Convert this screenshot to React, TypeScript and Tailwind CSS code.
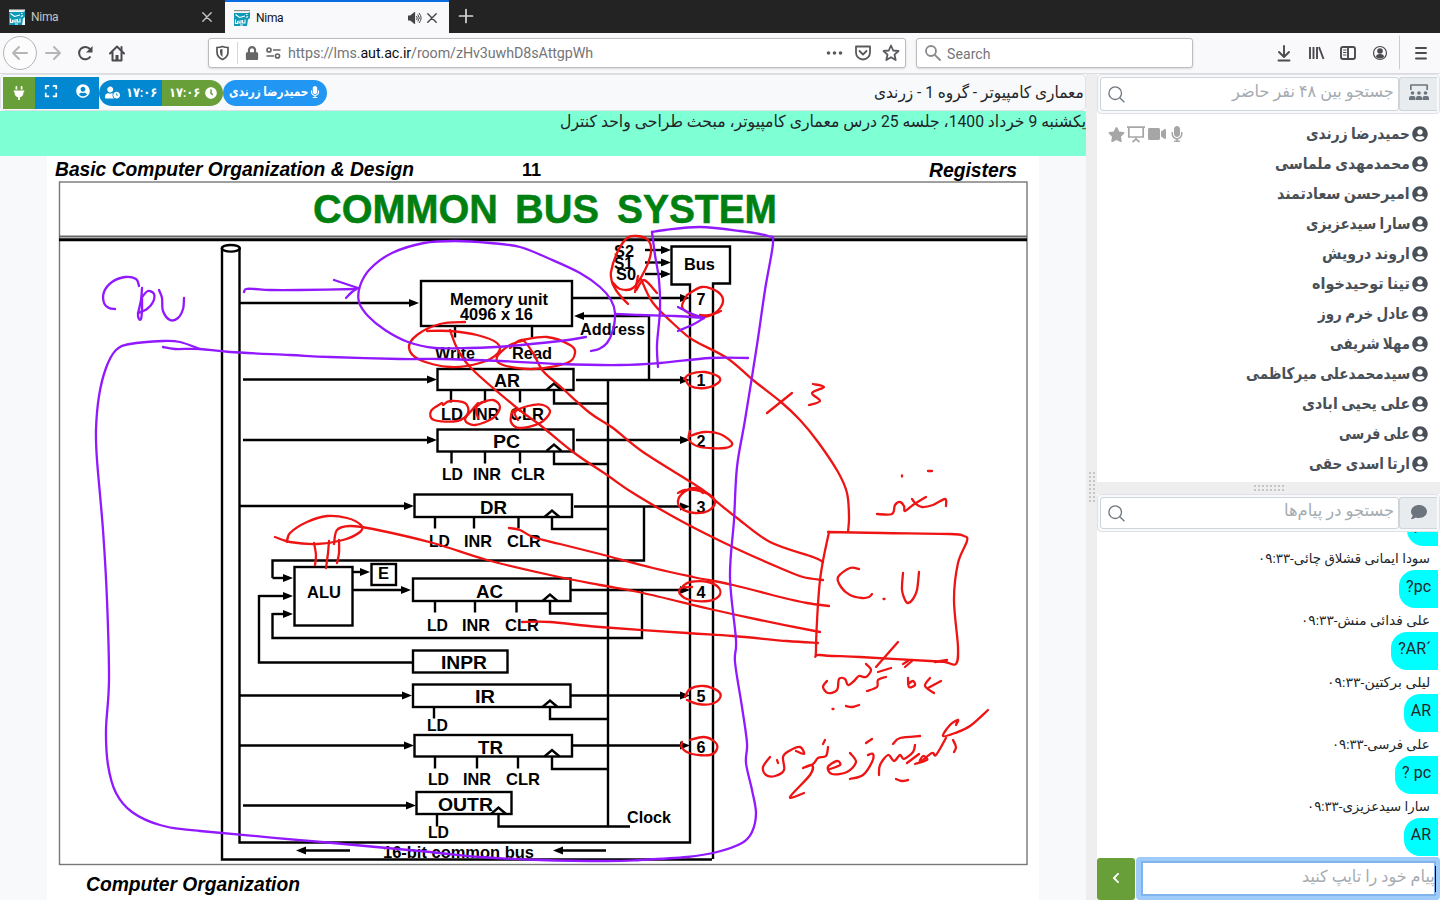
import { useLayoutEffect, useRef, type ReactNode } from "react";
import {
  FaPlug,
  FaExpand,
  FaUserCircle,
  FaUserClock,
  FaClock,
  FaMicrophone,
  FaVideo,
  FaStar,
  FaComment,
  FaChevronLeft,
  FaLock,
} from "react-icons/fa";

function Run({ w, className = "", children }: { w: number; className?: string; children: ReactNode }) {
  const ref = useRef<HTMLSpanElement>(null);
  useLayoutEffect(() => {
    const el = ref.current;
    if (el && el.offsetWidth) el.style.transform = `scaleX(${w / el.offsetWidth})`;
  }, [w]);
  return (
    <span className={`flex shrink-0 justify-start ${className}`} style={{ width: w }} dir="rtl">
      <span ref={ref} className="inline-block origin-right whitespace-nowrap">
        {children}
      </span>
    </span>
  );
}

/* Smooth path through "x,y x,y ..." points (Catmull-Rom to Bezier). */
function smooth(s: string) {
  const p = s.trim().split(/\s+/).map((q) => q.split(",").map(Number));
  let d = `M${p[0][0]},${p[0][1]}`;
  for (let i = 0; i < p.length - 1; i++) {
    const a = p[i - 1] ?? p[i];
    const b = p[i];
    const c = p[i + 1];
    const e = p[i + 2] ?? c;
    d += ` C${b[0] + (c[0] - a[0]) / 6},${b[1] + (c[1] - a[1]) / 6} ${c[0] - (e[0] - b[0]) / 6},${c[1] - (e[1] - b[1]) / 6} ${c[0]},${c[1]}`;
  }
  return d;
}

const purple = [
  "139,286 136,279 125,277 112,282 104,292 104,303 109,308 115,309",
  "142,288 141,300 138,314 139,319 141,319 142,310 142,296",
  "142,297 148,291 154,294 153,302 147,309 138,313",
  "159,290 162,298 163,311 170,320 178,318 183,309 184,298",
  "244,292 246,289 255,289 270,290 300,290 356,289",
  "334,280 346,284 358,288",
  "358,288 352,292 346,298",
  "586,337 560,341 510,346 470,348 435,348 408,342 385,330 368,316 359,302 360,286 370,269 392,253 424,243 455,241 490,243 520,247 550,259 580,273 600,287 611,300 615,313 613,330 607,343 599,349 591,351",
  "615,314 640,315 675,316 704,318",
  "678,307 690,313 704,318",
  "704,318 694,324 678,331",
  "163,347 175,349 200,349 230,352 290,355 330,357 400,359 440,359 500,361 560,364 620,365 660,363 710,358 748,358",
  "658,367 657,345 660,310 659,280 655,255 652,232",
  "652,232 665,230 700,227 740,231 768,236 773,243 765,290 757,345 745,420 737,467 734,520 730,577 736,640 735,662 742,707 747,743 746,763 752,790 756,813 752,832 742,843 717,852 687,857 640,860 607,861 540,860 480,857 430,852 333,843 200,831 160,825 132,812 116,793 108,765 106,730 109,680 107,600 103,530 97,460 96,430 99,396 106,368 116,350 130,344 163,341 180,342 200,349",
];

const red = [
  "612,282 611,272 617,253 627,238 637,236 648,240 651,252 645,270 633,288 620,289 612,282 618,293 628,304",
  "635,292 638,276 636,290 644,280 657,293",
  "641,279 653,303 677,327 693,340 727,358 753,380 781,402 800,420 818,442 838,472 847,493 849,517 848,532",
  "792,393 767,413",
  "813,384 824,387 812,393 820,401 809,405",
  "902,475.5 902,476.5",
  "928,471 932,471",
  "877,514 892,514 895,505 900,502 904,506 905,511 913,505 926,497",
  "912,499 916,504 922,507 933,505 945,499 946,506",
  "828,532 883,533 950,534 964,536 967,541 958,563 954,600 958,647 956,664 945,662 930,661 860,657 820,655 816,650 820,580 829,532",
  "859,569 850,568 838,577 841,587 850,595 862,598 869,597 872,594",
  "883.5,599 884.5,599",
  "903,573 902,590 905,600 908,603 913,599 917,590 919,572",
  "510,348 522,340 533,353 543,371 562,388 590,413 613,428 643,452 700,488 717,502 737,518 770,542 813,557 823,562",
  "450,330 458,350 473,370 517,408 540,425 573,452 607,475 633,493 683,522 735,548 780,568 803,577 823,580",
  "509,528 520,530 533,537 560,544 600,554 653,568 693,577 733,585 780,597 807,603 829,606",
  "334,544 337,530 350,526 373,529 433,543 487,560 550,575 600,585 643,593 710,609 760,620 820,632",
  "522,622 550,622 600,627 687,633 733,636 787,641 818,643",
  "275,537 290,542 317,544 343,540 360,532 361,525 347,518 327,516 307,522 290,533 287,542",
  "314,543 316,555 315,565",
  "329,541 328,553 326,568",
  "339,540 339,553 337,563",
  "465,322 440,324 417,335 409,348 420,360 450,367 480,363 498,353 497,343 477,335 450,331 427,331",
  "522,340 547,337 570,345 575,353 567,363 533,369 503,365 497,357 510,345 525,340",
  "442,403 431,411 434,420 457,421 468,413 465,403 450,401 443,405",
  "480,403 493,400 500,407 493,418 475,425 465,420 472,410 478,403",
  "478,418 476,408 483,402",
  "518,420 515,412 528,406 543,405 550,412 540,423 520,428 511,422 513,411 520,410",
  "687,295 702,287 718,292 723,302 715,313 700,317 687,312 682,306 687,295",
  "700,315 710,315 721,311",
  "684,379 690,374 705,372 719,377 718,383 705,388 690,386 685,378",
  "690,431 689,440 700,447 725,448 732,443 720,434 704,432 690,436",
  "678,493 685,490 696,490 710,495 715,503 708,511 695,513 682,509 678,501 684,492 695,488 703,493",
  "683,586 690,582 708,582 719,588 719,596 708,601 690,600 680,594 681,588 692,587",
  "685,697 690,689 704,686 718,691 720,698 711,704 698,704 687,700",
  "682,742 682,748 692,754 710,755 717,749 715,742 704,737 690,740",
  "827,681 823,687 828,693 837,690 839,679 845,679 848,685 854,681 859,676 866,677 871,670 866,664",
  "898,642 876,667",
  "878,672 891,668",
  "886,677 878,680 877,687 867,691",
  "832.5,709 833.5,709",
  "846,706 852,707 859,705",
  "903,664 908,661",
  "905,667 912,661",
  "935,662 947,660",
  "908,678 909,687 915,685 913,681 908,684",
  "930,678 925,686 934,693",
  "941,681 928,688",
  "770,757 763,767 766,775 775,776 784,770 783,757 789,751 800,747 804,754 796,751",
  "777,760 778,763",
  "825,740 823,744",
  "828,747 826,756 818,758 813,764 803,768 812,765 810,775 790,797 804,793",
  "850,753 856,762 847,772 832,774 828,767 837,761 840,765 830,769",
  "866,743 872,739",
  "868,755 873,754 872,762 863,775 850,779",
  "879,775 880,765 888,755 894,761 900,755 904,759 913,752 915,745",
  "893,744 900,738 920,736",
  "907,763 919,754",
  "896,779 902,781 908,780",
  "915,764 927,760 923,756 920,762 932,753 936,755 946,738",
  "958,720 956,725 958,720 950,725 943,736 955,733 970,726 988,710",
  "953,740 956,747 954,752",
];

/* x, baseline, width, size, text */
const labels: [number, number, number, number, string][] = [
  [450, 305, 98, 17, "Memory unit"],
  [460, 320, 73, 17, "4096 x 16"],
  [435, 359, 40, 16, "Write"],
  [512, 359, 40, 16, "Read"],
  [580, 335, 65, 17, "Address"],
  [684, 269.5, 31, 17, "Bus"],
  [614, 257, 20, 16, "S2"],
  [614, 268.5, 19, 16, "S1"],
  [616, 280, 20, 16, "S0"],
  [494, 386.5, 26, 19, "AR"],
  [493, 448, 27, 19, "PC"],
  [480, 513.5, 27, 19, "DR"],
  [307, 597.5, 34, 17, "ALU"],
  [378, 579, 11, 16, "E"],
  [476, 597.5, 27, 19, "AC"],
  [441, 669, 46, 19, "INPR"],
  [475, 703, 20, 19, "IR"],
  [478, 753.5, 25, 19, "TR"],
  [438, 810.5, 55, 19, "OUTR"],
  [627, 822.5, 44, 17, "Clock"],
  [383, 857.5, 151, 17, "16-bit common bus"],
  [441, 419.5, 22, 17, "LD"], [472, 419.5, 27, 17, "INR"], [510, 419.5, 34, 17, "CLR"],
  [442, 480, 21, 17, "LD"], [473, 480, 28, 17, "INR"], [511, 480, 34, 17, "CLR"],
  [429, 547, 21, 17, "LD"], [464, 547, 28, 17, "INR"], [507, 547, 34, 17, "CLR"],
  [427, 630.5, 21, 17, "LD"], [462, 630.5, 28, 17, "INR"], [505, 630.5, 34, 17, "CLR"],
  [427, 730.5, 21, 17, "LD"],
  [428, 784.5, 21, 17, "LD"], [463, 784.5, 28, 17, "INR"], [506, 784.5, 34, 17, "CLR"],
  [428, 837.5, 21, 17, "LD"],
  [696.5, 305, 9, 16.5, "7"],
  [696.5, 386, 9, 16.5, "1"],
  [696.5, 446.5, 9, 16.5, "2"],
  [696.5, 513, 9, 16.5, "3"],
  [696.5, 597.5, 9, 16.5, "4"],
  [696.5, 702, 9, 16.5, "5"],
  [696.5, 752.5, 9, 16.5, "6"],
];

/* x, y, width, height */
const boxes = [
  [421, 281, 151, 45], [437.5, 369, 136, 21], [437.5, 429.5, 136, 22], [414.5, 494.5, 157.5, 22.5],
  [413, 578.5, 157.5, 22.5], [413, 650.5, 94.5, 22], [413, 684.5, 157.5, 22.5], [414.5, 735, 157.5, 21.5],
  [416.5, 792, 95, 22], [294.5, 567, 58, 58.5], [371.5, 564, 24.5, 21],
];

/* x1, x2, y of arrows whose head is at x2 */
const arrows = [
  [240, 419, 303], [572, 690, 298], [649, 574, 316], [243, 437, 379.5], [576, 690, 380], [243, 437, 440],
  [576, 690, 440], [240, 414, 506], [574, 690, 506.5], [352, 411, 590], [571, 690, 590], [352, 370, 572],
  [240, 412, 695.5], [571, 690, 695.5], [240, 414, 745.5], [572, 690, 745.5], [243, 416, 805.5],
  [272.5, 293, 578], [259, 293, 596], [272.5, 293, 614], [645, 671, 250], [645, 671, 262.5], [645, 671, 274],
  [350, 296, 850.5], [606, 553, 850.5],
];

/* peak x, box bottom y, y of the wire to the clock line */
const clocks = [
  [554, 390, 403.5], [554, 451, 464], [552, 517, 529], [550, 601, 613.5], [550, 707, 719], [552, 756.5, 769], [498.5, 814, 826.5],
];

const ticks = [
  [455, 326], [532, 326], [451, 391], [485, 391], [520, 391], [451.5, 452], [485, 452], [520, 452],
  [435, 517], [474, 517], [518.5, 517], [435, 601], [475, 601], [516.5, 601], [434, 707],
  [435, 757], [477, 757], [518, 757], [437, 815],
];

function Slide() {
  return (
    <svg width="1086" height="744" viewBox="0 156 1086 744" className="block shrink-0" fontFamily="'Liberation Sans', Arial, sans-serif" fontWeight="bold">
      <rect x="0" y="156" width="1086" height="744" fill="#f8f9fb" />
      <rect x="47" y="156" width="992" height="744" fill="#fff" />
      <rect x="59.5" y="182" width="967.5" height="682.5" fill="none" stroke="#777" strokeWidth="1.4" />
      <path d="M59,236.5H1027" stroke="#666" strokeWidth="2" />
      <path d="M59,239.7H1027" stroke="#000" strokeWidth="3" />
      <g fontStyle="italic" fontSize="20">
        <text x="55" y="175.5" textLength="359" lengthAdjust="spacingAndGlyphs">Basic Computer Organization &amp; Design</text>
        <text x="929" y="177" textLength="88" lengthAdjust="spacingAndGlyphs">Registers</text>
        <text x="86" y="891" textLength="214" lengthAdjust="spacingAndGlyphs">Computer Organization</text>
      </g>
      <text x="522" y="176" fontSize="18" textLength="19">11</text>
      <g fill="#008010" stroke="#008010" strokeWidth="0.5" fontSize="40.5">
        <text x="313" y="223" textLength="185" lengthAdjust="spacingAndGlyphs">COMMON</text>
        <text x="515" y="223" textLength="84" lengthAdjust="spacingAndGlyphs">BUS</text>
        <text x="617" y="223" textLength="160" lengthAdjust="spacingAndGlyphs">SYSTEM</text>
      </g>
      <g stroke="#000" strokeWidth="2.4" fill="none">
        <path d="M222,248V859.5H712M239.5,248V842.5H690V284.5H671.5V246.5H730V283.5H713V859" />
        <ellipse cx="230.8" cy="248.3" rx="9" ry="3.3" />
        {boxes.map(([x, y, w, h]) => <rect key={`${x}-${y}`} x={x} y={y} width={w} height={h} />)}
        {arrows.map(([a, b, y], i) => <path key={i} d={`M${a},${y}H${b - Math.sign(b - a) * 4}`} />)}
        {clocks.map(([x, y, w], i) => (
          <path key={i} d={`M${x - 7.5},${y}L${x},${y - 6.5}L${x + 7.5},${y}M${x},${y}V${w}H${i === 6 ? 630 : 608}`} />
        ))}
        {ticks.map(([x, y], i) => <path key={i} d={`M${x},${y}V${y + 11.5}`} />)}
        <path d="M608,380V826.5M649,315V379M644,506V560.5H272.5V578M642,590V638H272.5V613M413,662.5H259V595" />
      </g>
      {arrows.map(([a, b, y], i) => {
        const s = Math.sign(b - a);
        return <path key={i} d={`M${b},${y}l${-10 * s},-4v8z`} />;
      })}
      {labels.map(([x, y, w, s, t], i) => (
        <text key={i} x={x} y={y} fontSize={s} textLength={w} lengthAdjust="spacingAndGlyphs">{t}</text>
      ))}
      <g fill="none" strokeLinecap="round" strokeLinejoin="round" strokeWidth="2.3">
        <g stroke="#ee1414">{red.map((s, i) => <path key={i} d={smooth(s)} />)}</g>
        <g stroke="#9118ff">{purple.map((s, i) => <path key={i} d={smooth(s)} />)}</g>
      </g>
    </svg>
  );
}

function Favicon() {
  return (
    <svg width="16" height="16" viewBox="0 0 16 16">
      <path d="M0 0h16v16H0z" fill="#f4fafb" />
      <path d="M0 0h16v1.2H0z" fill="#8b8b8b" />
      <path d="M0 3h14l2-1v6l-2 1.500-1 6.500H0z" fill="#0d9ab8" />
      <path d="M1.500 4.500 5.500 7.500 11 6M12 4.500h1.500M1.500 9.500v4h2v-2.500M5 10.500v2.500h2v-3M8.500 10v3h2.500V9.500M6 15h3M12 7.500l2-1" stroke="#fff" strokeWidth="1.1" fill="none" />
    </svg>
  );
}

function Close({ color }: { color: string }) {
  return (
    <svg width="10" height="10" viewBox="0 0 10 10" stroke={color} strokeWidth="1.4" strokeLinecap="round">
      <path d="M.8.8l8.4 8.4M9.2.8L.8 9.2" />
    </svg>
  );
}

function BrowserChrome() {
  return (
    <>
      <div className="flex h-[33px] shrink-0 bg-[#232323] text-[12px]">
        <div className="flex w-[225px] items-center pl-[9px] pr-[13px] pt-px text-[#c4c4c4]">
          <Favicon />
          <span className="ml-[6px] flex-1 tracking-[-0.3px]">Nima</span>
          <Close color="#c4c4c4" />
        </div>
        <div className="flex w-[224px] items-center border-t-2 border-[#0a6ce0] bg-[#f9f9fb] pl-[9px] pr-[12px] text-[#111]">
          <Favicon />
          <span className="ml-[6px] flex-1 tracking-[-0.3px]">Nima</span>
          <svg width="14" height="12" viewBox="0 0 14 12" className="mr-[5px]" fill="none" stroke="#444" strokeWidth="1.2">
            <path d="M.5 4h2L6.500 .8v10.400L2.500 8h-2z" fill="#444" />
            <path d="M8.500 4q1.500 2 0 4M9.800 2.500q3 3.500 0 7M11 1q4.200 5 0 10" strokeWidth="1" />
          </svg>
          <Close color="#444" />
        </div>
        <svg width="34" height="33" viewBox="0 0 34 33" stroke="#d8d8d8" strokeWidth="1.7" strokeLinecap="round">
          <path d="M10.500 16h13M17 9.500v13" />
        </svg>
      </div>
      <div className="flex h-[41px] shrink-0 items-center border-b border-[#dcdcde] bg-[#f9f9fb]">
        <svg width="208" height="40" viewBox="0 33 208 40" fill="none" strokeWidth="2" strokeLinecap="round" strokeLinejoin="round">
          <circle cx="20" cy="53" r="16.500" stroke="#b4b4b6" strokeWidth="1" fill="#fcfcfd" />
          <path d="M13 53h14M19 47l-6 6 6 6M46 53h14M54 47l6 6-6 6" stroke="#b5b5b7" />
          <path d="M90.500 56.500A6.200 6.200 0 1 1 90 49" stroke="#4a4a4f" strokeLinecap="butt" />
          <path d="M92.500 46v6.500H86z" fill="#4a4a4f" />
          <path d="M110 53.500l7-7 7 7M112.500 52.500v8h9v-8" stroke="#4a4a4f" />
          <path d="M115.500 60v-5h3v5z" fill="#4a4a4f" />
          <path d="M121.500 47v3" stroke="#4a4a4f" />
        </svg>
        <div className="flex h-[30px] w-[698px] items-center rounded-[3px] border border-[#bcbcbe] bg-white shadow-sm">
          <svg width="15" height="16" viewBox="0 0 15 16" className="ml-[6px]">
            <path d="M7.500 1.500Q10 2.500 13 2.500V7q0 5-5.500 7.500Q2 12 2 7V2.500q3 0 5.500-1z" fill="none" stroke="#555" strokeWidth="1.700" />
            <path d="M7.500 4v8Q5 10.500 5 7.500v-3z" fill="#555" />
          </svg>
          <div className="ml-[7px] h-[22px] w-px bg-[#d8d8da]" />
          <FaLock className="ml-[7px] text-[14px] text-[#666]" />
          <svg width="15" height="12" viewBox="0 0 15 12" className="ml-[7px]" fill="none" stroke="#666" strokeWidth="1.700">
            <circle cx="3" cy="3" r="2" /><path d="M7 3h7.500M.5 9H8" /><circle cx="11.500" cy="9" r="2" />
          </svg>
          <span className="ml-[7px] flex-1 pt-[2px] text-[14.300px] tracking-[-0.09px] text-[#757578]">
            https://lms.<span className="text-[#0c0c0d]">aut.ac.ir</span>/room/zHv3uwhD8sAttgpWh
          </span>
          <svg width="76" height="20" viewBox="0 0 76 20" className="mr-[3px]" fill="none" stroke="#5a5a5e" strokeWidth="1.800" strokeLinejoin="round">
            <g fill="#5a5a5e" stroke="none"><circle cx="2.500" cy="10" r="1.800" /><circle cx="8.500" cy="10" r="1.800" /><circle cx="14.500" cy="10" r="1.800" /></g>
            <path d="M30 3.500h14v6a7 7 0 0 1-14 0zM33.500 8l3.500 3.500L40.500 8" strokeLinecap="round" />
            <path d="M64.500 2.500l2.200 5 5.300.5-4 3.700 1.200 5.300-4.700-2.800-4.700 2.800 1.200-5.300-4-3.700 5.300-.5z" transform="translate(.5 0)" />
          </svg>
        </div>
        <div className="ml-[10px] flex h-[30px] w-[277px] items-center rounded-[3px] border border-[#bcbcbe] bg-white pl-[8px] shadow-sm">
          <svg width="16" height="16" viewBox="0 0 16 16" fill="none" stroke="#8a8a8d" strokeWidth="1.800" strokeLinecap="round">
            <circle cx="6" cy="6" r="5" /><path d="M9.800 9.800l5.200 5.200" />
          </svg>
          <span className="ml-[6px] pt-[2px] text-[14px] tracking-[0.1px] text-[#757578]">Search</span>
        </div>
        <svg width="247" height="40" viewBox="1193 33 247 40" fill="none" stroke="#4a4a4f" strokeWidth="1.900" strokeLinecap="round" strokeLinejoin="round">
          <path d="M1284 46v10M1279 52l5 5 5-5M1278.500 60.500h11" />
          <path d="M1310 47v12M1313.500 47v12M1317 47v12M1319 47l4.500 12" strokeLinecap="butt" />
          <rect x="1341" y="47" width="14" height="12" rx="2" /><path d="M1348 47v12" /><path d="M1343.500 50h2.500M1343.500 52.500h2.500M1343.500 55h2.500" strokeWidth="1" />
          <circle cx="1380" cy="53" r="6.500" strokeWidth="1.200" />
          <circle cx="1380" cy="51" r="2.800" fill="#4a4a4f" stroke="none" /><path d="M1376 57q0-3 4-3t4 3q-4 3-8 0z" fill="#4a4a4f" stroke="none" />
          <path d="M1399.500 36v33" stroke="#ccc" strokeWidth="1" />
          <path d="M1416 48h10M1416 53h10M1416 58.500h10" />
        </svg>
      </div>
    </>
  );
}

function SearchBox({ w, text, icon }: { w: number; text: string; icon: ReactNode }) {
  return (
    <div className="flex w-full shrink-0 items-stretch rounded border border-[#dee2e6] bg-[#f8f9fa] py-[2px] pl-[2px] pr-[2px]">
      <div className="flex flex-1 items-center justify-between rounded-[3px] border border-[#ced4da] bg-white pl-[7px] pr-[4px] text-[#a5abb1]">
        <svg width="17" height="17" viewBox="0 0 17 17" fill="none" stroke="#6c757d" strokeWidth="1.300">
          <circle cx="7.200" cy="7.200" r="6.300" /><path d="M11.800 11.800l4.600 4.400" />
        </svg>
        <Run w={w} className="pb-[3px]">{text}</Run>
      </div>
      <div className="flex w-[38px] items-center justify-center rounded-l-[3px] border border-r-0 border-[#ced4da] bg-[#e9ecef] pb-[3px] text-[#6c757d]">{icon}</div>
    </div>
  );
}

function Audience() {
  return (
    <svg width="20" height="17" viewBox="0 0 20 17" fill="#6c757d">
      <path d="M1 6V1.200Q1 .2 2 .2h16q1 0 1 1V6h-1.600V1.800H2.600V6z" />
      <circle cx="3.500" cy="9" r="1.800" /><circle cx="10" cy="9" r="1.800" /><circle cx="16.500" cy="9" r="1.800" />
      <path d="M0 16v-2q0-2 2-2h2.500q2 0 2 2v2zM7 16v-2q0-2 2-2h2q2 0 2 2v2zM13.500 16v-2q0-2 2-2H18q2 0 2 2v2z" />
    </svg>
  );
}

const people: [string, number][] = [
  ["حمیدرضا زرندی", 104],
  ["محمدمهدی ملماسی", 135],
  ["امیرحسن سعادتمند", 133],
  ["سارا سیدعزیزی", 104],
  ["اروند درویش", 88],
  ["تینا توحیدخواه", 98],
  ["عادل خرم روز", 92],
  ["مهلا شریفی", 80],
  ["سیدمحمدعلی میرکاظمی", 164],
  ["علی یحیی ابادی", 108],
  ["علی فرسی", 71],
  ["ارتا اسدی حقی", 101],
];

const messages: [string, number, string][] = [
  ["سودا ایمانی قشلاق چائی-۰۹:۳۳", 172, "pc?"],
  ["علی فدائی منش-۰۹:۳۳", 129, "´AR?"],
  ["لیلی برکتین-۰۹:۳۳", 103, "AR"],
  ["علی فرسی-۰۹:۳۳", 98, "pc ?"],
  ["سارا سیدعزیزی-۰۹:۳۳", 123, "AR"],
];

function Grip({ className }: { className: string }) {
  return (
    <div className={`grid gap-[2px] ${className}`}>
      {Array.from({ length: 16 }, (_, i) => <i key={i} className="h-[2px] w-[2px] bg-[#c6c6c6]" />)}
    </div>
  );
}

function Bubble({ text }: { text: string }) {
  return (
    <div dir="rtl" className="flex h-[38px] shrink-0 items-center self-end rounded-l-[16px] bg-[#00ffff] px-[7px] pb-[4px] text-[16px] text-[#212529]">
      {text}
    </div>
  );
}

export default function App() {
  return (
    <div className="flex h-[900px] w-[1440px] flex-col overflow-hidden bg-white font-[Roboto,'DejaVu_Sans',sans-serif]">
      <BrowserChrome />
      <div className="flex min-h-0 flex-1">
        <main className="flex w-[1086px] shrink-0 flex-col">
          <div className="flex h-[37px] shrink-0 items-center rounded border border-[#dee2e6] bg-[#f8f9fa] pl-[2px] pr-[1px]">
            <div className="flex h-[32px] w-[32px] items-center justify-center bg-[#689f38] text-[14px] text-white"><FaPlug /></div>
            <div className="flex h-[32px] w-[64px] items-center justify-around bg-[#0288d1] pb-[3px] text-[14px] text-white"><FaExpand /><FaUserCircle /></div>
            <div className="flex h-[26px] w-[63px] items-center justify-between rounded-l-full bg-[#0288d1] pl-[6px] pr-[5px] text-[13px] font-bold text-white">
              <FaUserClock className="text-[15px]" /><Run w={31}>۱۷:۰۶</Run>
            </div>
            <div className="flex h-[26px] w-[61px] items-center justify-between rounded-r-full bg-[#689f38] pl-[7px] pr-[6px] text-[13px] font-bold text-white">
              <Run w={31}>۱۷:۰۶</Run><FaClock className="text-[12px]" />
            </div>
            <div className="flex h-[26px] w-[104px] items-center justify-between rounded-full bg-[#2196f3] pl-[6px] pr-[6px] text-[13px] font-bold text-white">
              <Run w={79} className="pb-[2px]">حمیدرضا زرندی</Run><FaMicrophone className="mb-[2px] text-[12px]" />
            </div>
            <div className="flex-1" />
            <Run w={210} className="text-[16.500px] leading-[24px] text-[#212529]">معماری کامپیوتر - گروه 1 - زرندی</Run>
          </div>
          <div className="flex h-[45px] shrink-0 justify-end bg-[#7fffd4]">
            <Run w={526} className="text-[16.500px] leading-[22px] text-[#212529]">یکشنبه 9 خرداد 1400، جلسه 25 درس معماری کامپیوتر، مبحث طراحی واحد کنترل</Run>
          </div>
          <Slide />
        </main>
        <div className="flex w-[11px] shrink-0 items-center justify-center bg-[#eee]">
          <Grip className="grid-cols-2" />
        </div>
        <aside className="flex w-[343px] shrink-0 flex-col">
          <div className="flex h-[40px] shrink-0 text-[16.500px]"><SearchBox w={162} text="جستجو بین ۴۸ نفر حاضر" icon={<Audience />} /></div>
          <div className="flex h-[368px] shrink-0 flex-col overflow-hidden pt-[5px]">
            {people.map(([name, w], i) => (
              <div key={name} className="flex h-[30px] shrink-0 items-center pl-[11px] pr-[12px] text-[#495057]">
                {i === 0 && (
                  <div className="flex items-center gap-[2px] text-[17px] text-[#a6a6a6]">
                    <FaStar />
                    <svg width="18" height="17" viewBox="0 0 18 17" fill="none" stroke="#a6a6a6" strokeWidth="1.700">
                      <path d="M0 1.200h18M1.800 1v10h14.400V1M9 11v2.500M5.500 16l3.500-3 3.500 3" />
                    </svg>
                    <FaVideo className="ml-[1px] text-[18px]" /><FaMicrophone className="ml-[1px] text-[16px]" />
                  </div>
                )}
                <div className="flex-1" />
                <Run w={w} className="text-[16px] font-bold">{name}</Run>
                <FaUserCircle className="ml-[2px] text-[16px]" />
              </div>
            ))}
          </div>
          <div className="flex h-[12px] shrink-0 items-center justify-center bg-[#eee]"><Grip className="grid-cols-8" /></div>
          <div className="flex h-[38px] shrink-0 text-[16.500px]"><SearchBox w={110} text="جستجو در پیام‌ها" icon={<FaComment className="text-[16px]" />} /></div>
          <div className="flex h-[325px] shrink-0 flex-col justify-end overflow-hidden pb-px pr-[2px]">
            <Bubble text="pc" />
            {messages.map(([who, w, text]) => (
              <div key={who} className="flex shrink-0 flex-col items-end">
                <div className="flex h-[24px] items-center pr-[8px] text-[13.500px] text-[#212529]"><Run w={w}>{who}</Run></div>
                <Bubble text={text} />
              </div>
            ))}
          </div>
          <div className="flex flex-1">
            <div className="mt-px flex w-[38px] items-center justify-center rounded-[3px] bg-[#689f38] pb-[3px] text-[12px] text-white"><FaChevronLeft /></div>
            <div className="ml-px flex flex-1 rounded-[4px] bg-[#9fcbfb] p-[4px] pl-[5px]">
              <div className="flex flex-1 items-center justify-end border-2 border-[#80b4ec] bg-white text-[16.500px] text-[#a5abb1]">
                <Run w={133} className="pb-[2px]">پیام خود را تایپ کنید</Run>
                <div className="-mr-[2px] h-[26px] w-px bg-black" />
              </div>
            </div>
          </div>
        </aside>
      </div>
    </div>
  );
}
